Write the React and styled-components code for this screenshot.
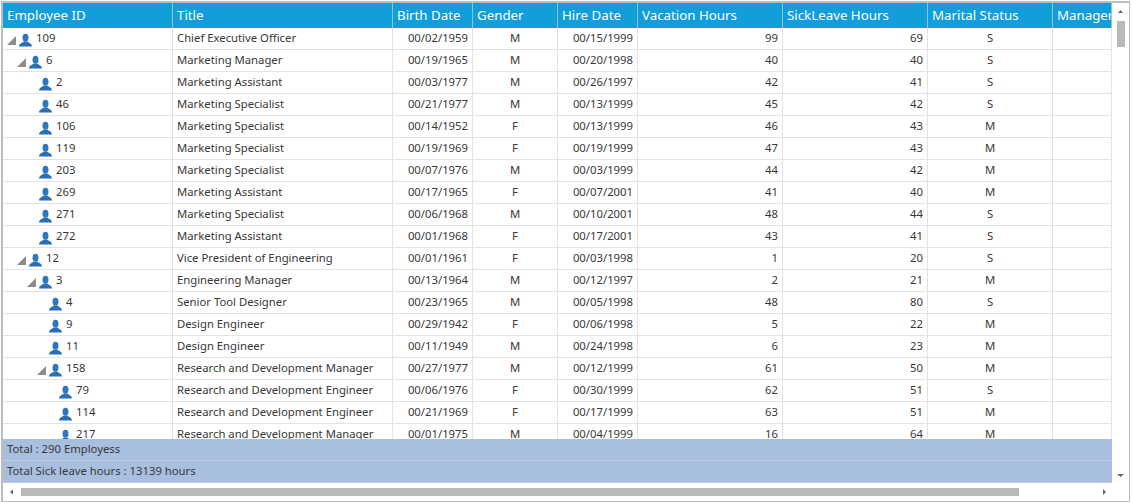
import React from 'react';
import styled, { createGlobalStyle } from 'styled-components';

const columns = [
  { key: 'id', label: 'Employee ID', width: 170 },
  { key: 'title', label: 'Title', width: 220 },
  { key: 'birth', label: 'Birth Date', width: 80, align: 'right' },
  { key: 'gender', label: 'Gender', width: 85, align: 'center' },
  { key: 'hire', label: 'Hire Date', width: 80, align: 'right' },
  { key: 'vacation', label: 'Vacation Hours', width: 145, align: 'right' },
  { key: 'sick', label: 'SickLeave Hours', width: 145, align: 'right' },
  { key: 'marital', label: 'Marital Status', width: 125, align: 'center' },
  { key: 'manager', label: 'Manager', width: 59 },
];

const employees = [
  [0, true, 109, 'Chief Executive Officer', '00/02/1959', 'M', '00/15/1999', 99, 69, 'S'],
  [1, true, 6, 'Marketing Manager', '00/19/1965', 'M', '00/20/1998', 40, 40, 'S'],
  [2, false, 2, 'Marketing Assistant', '00/03/1977', 'M', '00/26/1997', 42, 41, 'S'],
  [2, false, 46, 'Marketing Specialist', '00/21/1977', 'M', '00/13/1999', 45, 42, 'S'],
  [2, false, 106, 'Marketing Specialist', '00/14/1952', 'F', '00/13/1999', 46, 43, 'M'],
  [2, false, 119, 'Marketing Specialist', '00/19/1969', 'F', '00/19/1999', 47, 43, 'M'],
  [2, false, 203, 'Marketing Specialist', '00/07/1976', 'M', '00/03/1999', 44, 42, 'M'],
  [2, false, 269, 'Marketing Assistant', '00/17/1965', 'F', '00/07/2001', 41, 40, 'M'],
  [2, false, 271, 'Marketing Specialist', '00/06/1968', 'M', '00/10/2001', 48, 44, 'S'],
  [2, false, 272, 'Marketing Assistant', '00/01/1968', 'F', '00/17/2001', 43, 41, 'S'],
  [1, true, 12, 'Vice President of Engineering', '00/01/1961', 'F', '00/03/1998', 1, 20, 'S'],
  [2, true, 3, 'Engineering Manager', '00/13/1964', 'M', '00/12/1997', 2, 21, 'M'],
  [3, false, 4, 'Senior Tool Designer', '00/23/1965', 'M', '00/05/1998', 48, 80, 'S'],
  [3, false, 9, 'Design Engineer', '00/29/1942', 'F', '00/06/1998', 5, 22, 'M'],
  [3, false, 11, 'Design Engineer', '00/11/1949', 'M', '00/24/1998', 6, 23, 'M'],
  [3, true, 158, 'Research and Development Manager', '00/27/1977', 'M', '00/12/1999', 61, 50, 'M'],
  [4, false, 79, 'Research and Development Engineer', '00/06/1976', 'F', '00/30/1999', 62, 51, 'S'],
  [4, false, 114, 'Research and Development Engineer', '00/21/1969', 'F', '00/17/1999', 63, 51, 'M'],
  [4, false, 217, 'Research and Development Manager', '00/01/1975', 'M', '00/04/1999', 16, 64, 'M'],
];

const GlobalStyle = createGlobalStyle`
  html, body {
    margin: 0;
    padding: 0;
    background: #fff;
  }
  body {
    font-family: "Noto Sans", "Open Sans", "Liberation Sans", sans-serif;
    color: #383838;
  }
`;

const Page = styled.div`
  width: 1132px;
  height: 503px;
  padding: 1px;
  box-sizing: border-box;
  overflow: hidden;
`;

const Frame = styled.div`
  width: 1129px;
  height: 501px;
  box-sizing: border-box;
  border: 2px solid #bdbdbd;
  border-bottom-width: 1px;
  border-right-width: 1px;
  display: grid;
  grid-template-columns: 1109px 17px;
  grid-template-rows: 1fr 18px;
  background: #fff;
`;

const Main = styled.div`
  display: flex;
  flex-direction: column;
  min-height: 0;
  overflow: hidden;
`;

const HeaderRow = styled.div`
  display: flex;
  flex: none;
  height: 25px;
  background: #119eda;
`;

const HeaderCell = styled.div`
  flex: none;
  box-sizing: border-box;
  width: ${(p) => p.$width}px;
  padding-left: 4px;
  border-right: 1px solid #8fc4de;
  color: #fff;
  font-size: 13.3px;
  line-height: 25px;
  white-space: nowrap;
  overflow: hidden;
`;

const Body = styled.div`
  flex: 1;
  min-height: 0;
  overflow: hidden;
`;

const Row = styled.div`
  display: flex;
  height: 22px;
  box-sizing: border-box;
  border-bottom: 1px solid #e2e2e2;
`;

const Cell = styled.div`
  flex: none;
  box-sizing: border-box;
  width: ${(p) => p.$width}px;
  padding: 0 4px;
  border-right: 1px solid #e2e2e2;
  font-size: 11.3px;
  line-height: 20px;
  text-align: ${(p) => p.$align || 'left'};
  white-space: nowrap;
  overflow: hidden;
`;

const TreeCell = styled(Cell)`
  display: flex;
  align-items: flex-start;
  padding: 0 0 0 ${(p) => 4 + p.$level * 10}px;
`;

const Expander = styled.svg`
  flex: none;
  width: 10px;
  height: 22px;
  margin-right: 2px;
  visibility: ${(p) => (p.$hidden ? 'hidden' : 'visible')};
`;

const Person = styled.svg`
  flex: none;
  width: 14px;
  height: 22px;
  margin-right: 3px;
`;

const Footer = styled.div`
  flex: none;
`;

const FooterRow = styled.div`
  height: 22px;
  box-sizing: border-box;
  padding-left: 4px;
  background: #a9bfdf;
  border-bottom: 1px solid #bccde6;
  font-size: 11.3px;
  line-height: 20px;
`;

const BarV = styled.div`
  display: flex;
  flex-direction: column;
  align-items: flex-start;
  padding-left: 5px;
`;

const BarH = styled.div`
  grid-column: 1 / 2;
  display: flex;
  align-items: center;
`;

const ThumbV = styled.div`
  width: 8px;
  height: 26px;
  margin-top: 4px;
  background: #b9b9b9;
`;

const ThumbH = styled.div`
  width: 998px;
  height: 8px;
  margin-left: 5px;
  background: #b9b9b9;
`;

const Arrow = styled.svg`
  flex: none;
  width: ${(p) => p.$size}px;
  height: ${(p) => p.$size}px;
  margin: ${(p) => p.$margin || 0};
`;

const Spacer = styled.div`
  flex: 1;
`;

function PersonIcon() {
  return (
    <Person viewBox="0 0 14 22">
      <ellipse cx="6.5" cy="9.7" rx="3" ry="3.9" fill="#2f77bd" />
      <path d="M0 18.5 C0 15.6 3 15.2 5 13.5 L8 13.5 C10 15.2 13 15.6 13 18.5 Z" fill="#2a6fb4" />
    </Person>
  );
}

function TriangleIcon({ hidden }) {
  return (
    <Expander viewBox="0 0 10 22" $hidden={hidden}>
      <path d="M0 17 L9 17 L9 8 Z" fill="#8c8c8c" />
    </Expander>
  );
}

export default function App() {
  return (
    <Page>
      <GlobalStyle />
      <Frame>
        <Main>
          <HeaderRow>
            {columns.map((col) => (
              <HeaderCell key={col.key} $width={col.width}>{col.label}</HeaderCell>
            ))}
          </HeaderRow>
          <Body>
            {employees.map(([level, parent, id, title, birth, gender, hire, vacation, sick, marital]) => {
              const values = [title, birth, gender, hire, vacation, sick, marital, ''];
              return (
                <Row key={id}>
                  <TreeCell $width={columns[0].width} $level={level}>
                    <TriangleIcon hidden={!parent} />
                    <PersonIcon />
                    {id}
                  </TreeCell>
                  {values.map((value, i) => (
                    <Cell key={columns[i + 1].key} $width={columns[i + 1].width} $align={columns[i + 1].align}>
                      {value}
                    </Cell>
                  ))}
                </Row>
              );
            })}
          </Body>
          <Footer>
            <FooterRow>Total : 290 Employess</FooterRow>
            <FooterRow>Total Sick leave hours : 13139 hours</FooterRow>
          </Footer>
        </Main>
        <BarV>
          <Arrow viewBox="0 0 7 7" $size={7} $margin="7px 0 0">
            <path d="M1 3 L6 3 L3.5 0 Z" fill="#666" />
          </Arrow>
          <ThumbV />
          <Spacer />
          <Arrow viewBox="0 0 7 7" $size={7} $margin="0 0 6px">
            <path d="M0 4 L7 4 L3.5 7 Z" fill="#666" />
          </Arrow>
        </BarV>
        <BarH>
          <Arrow viewBox="0 0 6 6" $size={6} $margin="0 0 0 7px">
            <path d="M3 0.5 L3 5.5 L0 3 Z" fill="#666" />
          </Arrow>
          <ThumbH />
          <Spacer />
          <Arrow viewBox="0 0 6 6" $size={6} $margin="0 3px 0 0">
            <path d="M0 0 L0 6 L3 3 Z" fill="#666" />
          </Arrow>
        </BarH>
      </Frame>
    </Page>
  );
}
